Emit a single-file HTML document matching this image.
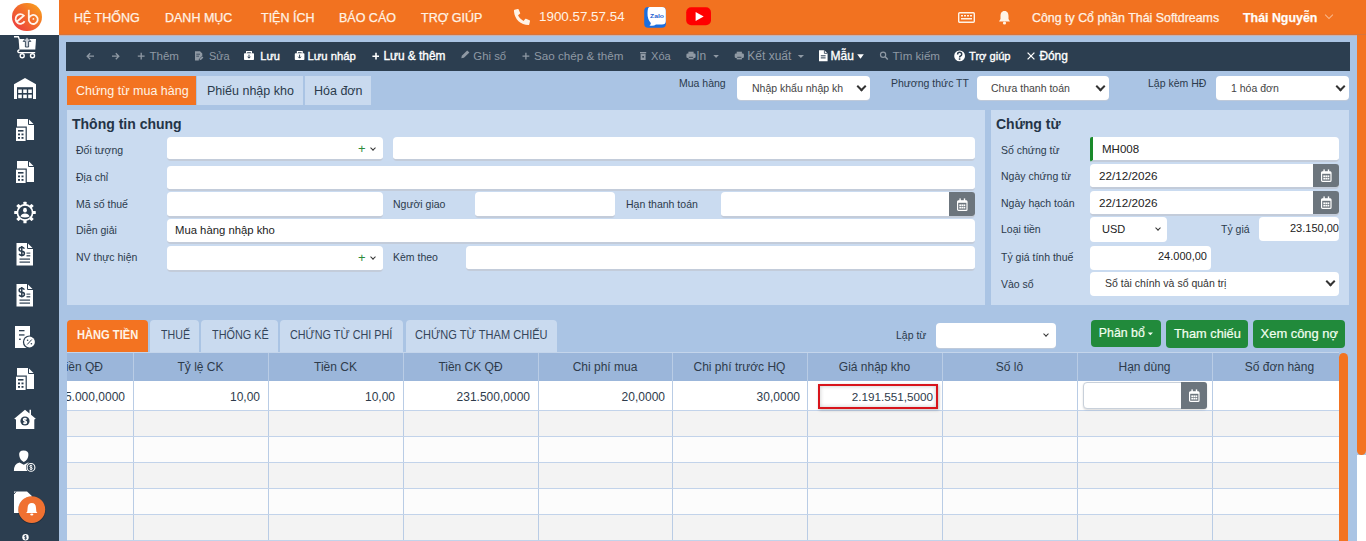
<!DOCTYPE html>
<html><head><meta charset="utf-8">
<style>
*{margin:0;padding:0;box-sizing:border-box}
html,body{width:1366px;height:541px;overflow:hidden;background:#AAC4E4;font-family:"Liberation Sans",sans-serif;position:relative}
.a{position:absolute;white-space:nowrap}
#hdr{left:0;top:0;width:1366px;height:35px;background:#F27220;border-bottom:1px solid #D8743A;box-shadow:0 1px 0 #C9B2B0}
#logo{left:0;top:0;width:59px;height:35px;background:#fff}
.mn{top:10.5px;color:#FFF3E6;font-size:12.5px;line-height:14px;-webkit-text-stroke:0.25px #FFF3E6}
#side{left:0;top:35px;width:59px;height:506px;background:#2C3E50}
#tb{left:66px;top:42px;width:1284px;height:29px;background:#2C3E50}
.tt{top:49px;font-size:11.4px;line-height:14px;color:#8C99A8}
.tw{color:#fff}
.tab{top:76px;height:29px;background:#C9DAEF;font-size:12.5px;line-height:30px;color:#2B3A4C}
.lbl{font-size:10.5px;color:#2B3A4C;line-height:13px}
.inp{background:#fff;border-radius:4px;border-bottom:2px solid #C3CCDA}
.pnl{background:#CADBF0}
.sel{background:#fff;border-radius:4px;box-shadow:0 1px 0 #BFCADA;font-size:10.5px;color:#444;line-height:13px}
.chev{position:absolute;width:7px;height:7px;border-right:2px solid #333;border-bottom:2px solid #333;transform:rotate(45deg)}
.cal{position:absolute;background:#6C757D;border-radius:0 3px 3px 0}
.gt{top:320px;height:32px;background:#C9DAEF;border-radius:4px 4px 0 0;font-size:12px;line-height:32px;color:#34455A}
.gh{top:353px;height:28px;background:#9BB6DA}
.gl{top:353px;width:1px;height:188px;background:#B9CCE5}
.ghl{top:353px;width:1px;height:28px;background:#C3D4EA}
.htx{top:361px;font-size:12px;line-height:13px;color:#2E3B4B}
.rtx{top:391px;font-size:12px;line-height:13px;color:#2E3B4B}
.btn{top:320px;height:27px;background:#218A3B;border-radius:4px;color:#F2FFF0;font-size:12.5px;line-height:27px}
</style></head><body>
<div id="hdr" class="a"></div>
<div id="logo" class="a"></div>
<div class="a" style="left:12px;top:2.5px;width:29.5px;height:28.5px;border-radius:50%;background:linear-gradient(45deg,#EC3542 0%,#F26A2C 50%,#F9A81A 100%)"></div>
<svg class="a" style="left:12px;top:3px" width="29" height="29" viewBox="0 0 29 29">
<g fill="none" stroke="#FFF4EA" stroke-width="1.8"><path d="M5 18.5 L11.8 12.6 A4.8 4.8 0 1 0 12.6 18.3"/><path d="M16.8 6.8 V15.8 A4.5 4.5 0 1 0 17 15"/></g><circle cx="21.4" cy="15.9" r="0.9" fill="#FFF4EA"/></svg>
<div class="a mn" style="left:74px">HỆ THỐNG</div>
<div class="a mn" style="left:165px">DANH MỤC</div>
<div class="a mn" style="left:261px">TIỆN ÍCH</div>
<div class="a mn" style="left:339px">BÁO CÁO</div>
<div class="a mn" style="left:421px">TRỢ GIÚP</div>
<svg class="a" style="left:514px;top:9px" width="16" height="16" viewBox="0 0 512 512"><path fill="#FFF3E6" d="M497 361l-112-48c-10-4-21-1-28 7l-50 61c-78-37-141-100-178-178l61-50c8-7 11-18 7-28L149 13c-5-11-17-17-28-14L17 23C6 26-1 35-1 46c0 257 208 465 465 465 11 0 20-7 23-18l24-104c3-12-3-23-14-28z"/></svg>
<div class="a" style="left:539px;top:9px;font-size:13.4px;line-height:16px;color:#FFF3E6">1900.57.57.54</div>
<svg class="a" style="left:644px;top:6px" width="68" height="22" viewBox="644 6 68 22">
<rect x="644.2" y="6.9" width="21.7" height="20.9" rx="4" fill="#1A6FE0"/>
<path d="M649.5 7 H662 Q665.8 7 665.8 10.8 V21 Q665.8 24.6 662 24.6 H656 Q653.5 26.5 649.5 25.5 Q651.2 24.3 650.8 23 Q647.3 19 647.5 13 Q647.6 7 649.5 7Z" fill="#fff"/>
<text x="650" y="17.9" font-family="Liberation Sans" font-weight="bold" font-size="6.2" fill="#1F5FD0" textLength="14" lengthAdjust="spacingAndGlyphs">Zalo</text>
<rect x="686.2" y="7.2" width="24.8" height="18.1" rx="5" fill="#FF0000"/>
<path d="M695.6 11.9 L703.7 16.5 L695.6 21.1 Z" fill="#fff"/>
</svg>
<!-- keyboard -->
<svg class="a" style="left:958px;top:12px" width="17" height="11" viewBox="0 0 17 11"><rect x="0.7" y="0.7" width="15.6" height="9.6" rx="1" fill="none" stroke="#FFF3E6" stroke-width="1.4"/><g fill="#FFF3E6"><rect x="3" y="3" width="2" height="1.5"/><rect x="6" y="3" width="2" height="1.5"/><rect x="9" y="3" width="2" height="1.5"/><rect x="12" y="3" width="2" height="1.5"/><rect x="3" y="6" width="11" height="1.5"/></g></svg>
<svg class="a" style="left:998px;top:10px" width="13" height="15" viewBox="0 0 13 15"><path d="M6.5 1 C3.5 1 2.5 3.5 2.5 6 V9 L1 11.5 H12 L10.5 9 V6 C10.5 3.5 9.5 1 6.5 1Z" fill="#FFF3E6"/><circle cx="6.5" cy="13" r="1.6" fill="#FFF3E6"/></svg>
<div class="a mn" style="left:1032px;top:11px;font-size:12.4px;text-transform:none">Công ty Cổ phần Thái Softdreams</div>
<div class="a mn" style="left:1243px;top:11px;font-size:12.4px;font-weight:bold;color:#fff">Thái Nguyễn</div>
<div class="chev" style="left:1326px;top:12px;width:6px;height:6px;border-color:rgba(255,230,210,.6);border-width:0 1.5px 1.5px 0"></div>
<!-- right scrollbar -->
<div class="a" style="left:1357px;top:35px;width:9px;height:420px;background:#F37321;border-radius:0 0 5px 5px"></div>
<div class="a" style="left:1357px;top:455px;width:9px;height:86px;background:#fff"></div>

<!-- sidebar -->
<div id="side" class="a"></div>

<svg class="a" style="left:0;top:0" width="59" height="541" viewBox="0 0 59 541">
<!-- cart -->
<path d="M14 36.8 H18.3 L19.2 39" fill="none" stroke="#fff" stroke-width="1.4"/>
<path d="M18.6 39 H36 L35.3 49.6 H19.4 Z" fill="#fff"/>
<path d="M27 37.2 L30.8 41.4 H28.6 V47 H25.4 V41.4 H23.2 Z" fill="#C9CED6" stroke="#2C3E50" stroke-width="0.9"/>
<path d="M19.5 49.6 Q16.4 51.3 18.8 52.6 H35.2" fill="none" stroke="#fff" stroke-width="1.4"/>
<circle cx="22.2" cy="55.7" r="2" fill="none" stroke="#fff" stroke-width="1.4"/>
<circle cx="32.5" cy="55.7" r="2" fill="none" stroke="#fff" stroke-width="1.4"/>
<!-- warehouse -->
<path d="M14 84.2 L25 78 L36 84.2 V99 H14 Z" fill="#fff"/>
<rect x="17" y="87.2" width="16" height="11.8" fill="#2C3E50"/>
<g fill="#fff"><rect x="18.2" y="89.5" width="3.6" height="3.5"/><rect x="23.2" y="89.5" width="3.6" height="3.5"/><rect x="28.2" y="89.5" width="3.6" height="3.5"/>
<rect x="18.2" y="94.6" width="3.6" height="3.6"/><rect x="23.2" y="94.6" width="3.6" height="3.6"/><rect x="28.2" y="94.6" width="3.6" height="3.6"/></g>
<g transform="translate(0 0)">
<path d="M17 119 H28.5 L34 124.5 V140 H17 Z" fill="#fff"/>
<path d="M28.5 119 V124.5 H34" fill="none" stroke="#2C3E50" stroke-width="1"/>
<rect x="15" y="126.5" width="11.8" height="15.5" fill="#2C3E50"/>
<rect x="16" y="127.7" width="9.6" height="13.3" fill="#fff"/>
<rect x="18" y="130" width="5.5" height="1.6" fill="#2C3E50"/>
<rect x="18" y="133.5" width="2" height="1.8" fill="#2C3E50"/><rect x="21.5" y="133.5" width="2" height="1.8" fill="#2C3E50"/>
<rect x="18" y="137" width="2" height="1.8" fill="#2C3E50"/><rect x="21.5" y="137" width="2" height="1.8" fill="#2C3E50"/>
</g>
<g transform="translate(0 42)">
<path d="M17 119 H28.5 L34 124.5 V140 H17 Z" fill="#fff"/>
<path d="M28.5 119 V124.5 H34" fill="none" stroke="#2C3E50" stroke-width="1"/>
<rect x="15" y="126.5" width="11.8" height="15.5" fill="#2C3E50"/>
<rect x="16" y="127.7" width="9.6" height="13.3" fill="#fff"/>
<rect x="18" y="130" width="5.5" height="1.6" fill="#2C3E50"/>
<rect x="18" y="133.5" width="2" height="1.8" fill="#2C3E50"/><rect x="21.5" y="133.5" width="2" height="1.8" fill="#2C3E50"/>
<rect x="18" y="137" width="2" height="1.8" fill="#2C3E50"/><rect x="21.5" y="137" width="2" height="1.8" fill="#2C3E50"/>
</g>
<!-- gear -->
<g transform="translate(25 212.5)" fill="#fff">
<circle r="7.6" fill="none" stroke="#fff" stroke-width="1.7"/>
<g id="teeth"><rect x="-1.6" y="-10.8" width="3.2" height="3.5" rx="0.6"/></g>
<use href="#teeth" transform="rotate(45)"/><use href="#teeth" transform="rotate(90)"/><use href="#teeth" transform="rotate(135)"/>
<use href="#teeth" transform="rotate(180)"/><use href="#teeth" transform="rotate(225)"/><use href="#teeth" transform="rotate(270)"/><use href="#teeth" transform="rotate(315)"/>
<ellipse cx="0" cy="-2.3" rx="1.9" ry="2.4"/>
<path d="M-4.6 4 Q-3.5 1 0 1 Q3.5 1 4.6 4 Q0 6 -4.6 4Z"/>
</g>
<g transform="translate(0 0)">
<path d="M16.5 243 H27.5 L33 248.5 V265.5 H16.5 Z" fill="#fff"/>
<path d="M27.5 243 V248.5 H33" fill="none" stroke="#2C3E50" stroke-width="1"/>
<path d="M24.45 248.65 Q23.39 247.17 21.80 247.17 Q19.15 247.17 19.15 249.23 Q19.15 251.13 21.80 251.30 Q24.45 251.47 24.45 253.37 Q24.45 255.43 21.80 255.43 Q19.95 255.43 19.15 253.95 M21.80 246.00 V256.60" fill="none" stroke="#2C3E50" stroke-width="1.5"/>
<rect x="26.5" y="252.6" width="3.8" height="1" fill="#2C3E50"/><rect x="26.5" y="255.2" width="3.8" height="1.2" fill="#2C3E50"/>
<rect x="19.5" y="258.5" width="10.5" height="1.2" fill="#2C3E50"/><rect x="19.5" y="261.5" width="10.5" height="1.2" fill="#2C3E50"/>
</g>
<g transform="translate(0 41)">
<path d="M16.5 243 H27.5 L33 248.5 V265.5 H16.5 Z" fill="#fff"/>
<path d="M27.5 243 V248.5 H33" fill="none" stroke="#2C3E50" stroke-width="1"/>
<path d="M24.45 248.65 Q23.39 247.17 21.80 247.17 Q19.15 247.17 19.15 249.23 Q19.15 251.13 21.80 251.30 Q24.45 251.47 24.45 253.37 Q24.45 255.43 21.80 255.43 Q19.95 255.43 19.15 253.95 M21.80 246.00 V256.60" fill="none" stroke="#2C3E50" stroke-width="1.5"/>
<rect x="26.5" y="252.6" width="3.8" height="1" fill="#2C3E50"/><rect x="26.5" y="255.2" width="3.8" height="1.2" fill="#2C3E50"/>
<rect x="19.5" y="258.5" width="10.5" height="1.2" fill="#2C3E50"/><rect x="19.5" y="261.5" width="10.5" height="1.2" fill="#2C3E50"/>
</g>
<!-- percent doc -->
<rect x="15" y="326" width="15" height="22" fill="#fff"/>
<rect x="19" y="330" width="5.5" height="1.3" fill="#2C3E50"/><rect x="19" y="334.3" width="5.5" height="1.3" fill="#2C3E50"/><rect x="19" y="338.6" width="1.8" height="1.3" fill="#2C3E50"/>
<circle cx="29.5" cy="342" r="6.6" fill="#2C3E50"/>
<circle cx="29.5" cy="342" r="5.4" fill="#fff"/>
<path d="M27.2 344.5 L31.8 339.5" stroke="#2C3E50" stroke-width="1"/>
<circle cx="27.6" cy="340.3" r="0.8" fill="#2C3E50"/><circle cx="31.4" cy="343.8" r="0.8" fill="#2C3E50"/>
<g transform="translate(0 249)">
<path d="M17 119 H28.5 L34 124.5 V140 H17 Z" fill="#fff"/>
<path d="M28.5 119 V124.5 H34" fill="none" stroke="#2C3E50" stroke-width="1"/>
<rect x="15" y="126.5" width="11.8" height="15.5" fill="#2C3E50"/>
<rect x="16" y="127.7" width="9.6" height="13.3" fill="#fff"/>
<rect x="18" y="130" width="5.5" height="1.6" fill="#2C3E50"/>
<rect x="18" y="133.5" width="2" height="1.8" fill="#2C3E50"/><rect x="21.5" y="133.5" width="2" height="1.8" fill="#2C3E50"/>
<rect x="18" y="137" width="2" height="1.8" fill="#2C3E50"/><rect x="21.5" y="137" width="2" height="1.8" fill="#2C3E50"/>
</g>
<!-- house $ -->
<path d="M14.2 418.8 L25 409.8 L29.5 413.5 V409.8 H31 V414.8 L35.8 418.8 L34.3 419.5 V429 H16 V419.5 Z" fill="#fff"/>
<circle cx="25" cy="421" r="4.6" fill="#2C3E50"/>
<path d="M26.62 419.38 Q25.98 418.46 25.00 418.46 Q23.38 418.46 23.38 419.73 Q23.38 420.90 25.00 421.00 Q26.62 421.10 26.62 422.27 Q26.62 423.54 25.00 423.54 Q23.86 423.54 23.38 422.62 M25.00 417.75 V424.25" fill="none" stroke="#fff" stroke-width="1.2"/>
<!-- person $ -->
<path d="M19.2 455 Q18.6 450.6 23.6 450.4 Q28.8 450.4 28.4 455 Q28.2 460 23.8 462 Q19.6 460 19.2 455Z" fill="#fff"/>
<path d="M13.9 471 Q13.8 464 19.5 462.6 L23.8 464.8 L28 462.6 Q30.5 463.2 31.5 465 V471 Z" fill="#fff"/>
<circle cx="31" cy="467.4" r="5" fill="#2C3E50"/>
<circle cx="31" cy="467.4" r="3.9" fill="none" stroke="#fff" stroke-width="1.1"/>
<path d="M32.30 466.10 Q31.78 465.37 31.00 465.37 Q29.70 465.37 29.70 466.39 Q29.70 467.32 31.00 467.40 Q32.30 467.48 32.30 468.41 Q32.30 469.43 31.00 469.43 Q30.09 469.43 29.70 468.70 M31.00 464.80 V470.00" fill="none" stroke="#fff" stroke-width="0.9"/>
<!-- doc behind bell -->
<path d="M14 491.5 H27 L31.8 496 V513 H14 Z" fill="#fff"/>
<path d="M16 491.5 L14 494" stroke="#2C3E50" stroke-width="1"/>
<circle cx="31.8" cy="510.3" r="13.8" fill="rgba(0,0,0,.25)"/>
<circle cx="31.8" cy="509.6" r="13.4" fill="#F07131"/>
<path d="M31.8 503 Q27.8 503 27.6 508 L27.3 511.6 L26.2 513 H37.4 L36.3 511.6 L36 508 Q35.8 503 31.8 503Z" fill="#fff"/>
<ellipse cx="31.8" cy="514.6" rx="1.6" ry="1" fill="#fff"/>
<circle cx="25.5" cy="537.3" r="3.2" fill="#fff"/>
<path d="M26.60 536.20 Q26.16 535.58 25.50 535.58 Q24.40 535.58 24.40 536.44 Q24.40 537.23 25.50 537.30 Q26.60 537.37 26.60 538.16 Q26.60 539.02 25.50 539.02 Q24.73 539.02 24.40 538.40 M25.50 535.10 V539.50" fill="none" stroke="#2C3E50" stroke-width="0.8"/>
</svg>

<!-- toolbar -->
<div id="tb" class="a"></div>
<div class="a" style="left:149.4px;top:49px;font-size:11.58px;line-height:14px;color:#8F99A4">Thêm</div>
<div class="a" style="left:208.9px;top:49px;font-size:11.00px;line-height:14px;color:#8F99A4">Sửa</div>
<div class="a" style="left:260.3px;top:49px;font-size:11.02px;line-height:14px;color:#FFFFFF;-webkit-text-stroke:0.35px #fff">Lưu</div>
<div class="a" style="left:307.4px;top:49px;font-size:11.34px;line-height:14px;color:#FFFFFF;-webkit-text-stroke:0.35px #fff">Lưu nháp</div>
<div class="a" style="left:383.4px;top:49px;font-size:11.89px;line-height:14px;color:#FFFFFF;-webkit-text-stroke:0.35px #fff">Lưu &amp; thêm</div>
<div class="a" style="left:473.3px;top:49px;font-size:11.36px;line-height:14px;color:#8F99A4">Ghi sổ</div>
<div class="a" style="left:534.0px;top:49px;font-size:11.66px;line-height:14px;color:#8F99A4">Sao chép &amp; thêm</div>
<div class="a" style="left:651.1px;top:49px;font-size:11.00px;line-height:14px;color:#8F99A4">Xóa</div>
<div class="a" style="left:696.2px;top:49px;font-size:12.00px;line-height:14px;color:#8F99A4">In</div>
<div class="a" style="left:747.3px;top:49px;font-size:12.00px;line-height:14px;color:#8F99A4">Kết xuất</div>
<div class="a" style="left:830.6px;top:49px;font-size:12.00px;line-height:14px;color:#FFFFFF;-webkit-text-stroke:0.35px #fff">Mẫu</div>
<div class="a" style="left:892.4px;top:49px;font-size:11.58px;line-height:14px;color:#8F99A4">Tìm kiếm</div>
<div class="a" style="left:969.0px;top:49px;font-size:11.14px;line-height:14px;color:#FFFFFF;-webkit-text-stroke:0.35px #fff">Trợ giúp</div>
<div class="a" style="left:1039.4px;top:49px;font-size:11.91px;line-height:14px;color:#FFFFFF;-webkit-text-stroke:0.35px #fff">Đóng</div>
<svg class="a" style="left:0;top:0" width="1100" height="75" viewBox="0 0 1100 75">
<g fill="none" stroke="#8F99A4" stroke-width="1.3">
<path d="M94 56.2 H87.2 M90.2 53.2 L87.2 56.2 L90.2 59.2"/>
<path d="M112 56.2 H118.8 M115.8 53.2 L118.8 56.2 L115.8 59.2"/>
<path d="M141.2 52.8 V59.6 M137.8 56.2 H144.6"/>
<path d="M525.9 52.8 V59.6 M522.5 56.2 H529.3"/>
</g>
<path d="M376 52.8 V59.6 M372.4 56.2 H379" stroke="#fff" stroke-width="1.6"/>
<!-- sua -->
<path d="M195 51.3 H200 L202.3 53.6 V55.8 L198.8 59.3 V60.5 H195 Z" fill="#8F99A4"/>
<path d="M196.3 54.2 H200 M196.3 56.2 H199" stroke="#2C3E50" stroke-width="0.8"/>
<path d="M199.6 60.3 L200 58.6 L202.2 56.4 L203.4 57.6 L201.2 59.8 Z" fill="#8F99A4"/>
<!-- luu -->
<g fill="#fff">
<path d="M246.6 53.4 V51.6 H251.4 V53.4" fill="none" stroke="#fff" stroke-width="1.1"/>
<rect x="244" y="53.3" width="10" height="6.8" rx="0.8"/>
<path d="M297.4 53.4 V51.6 H302.2 V53.4" fill="none" stroke="#fff" stroke-width="1.1"/>
<rect x="294.8" y="53.3" width="9.6" height="6.8" rx="0.8"/>
</g>
<path d="M249 54.6 V58 M247.6 56.7 L249 58.2 L250.4 56.7" fill="none" stroke="#2C3E50" stroke-width="1"/>
<path d="M299.6 54.6 V58 M298.2 56.7 L299.6 58.2 L301 56.7" fill="none" stroke="#2C3E50" stroke-width="1"/>
<!-- pencil -->
<path d="M461.3 58.2 L461.8 55.8 L467.2 50.6 L469.4 52.6 L463.9 57.8 Z" fill="#8F99A4"/>
<!-- trash -->
<rect x="640" y="52" width="6.2" height="1.3" fill="#8F99A4"/>
<rect x="640.6" y="53.8" width="5" height="6.2" fill="#8F99A4"/>
<rect x="642.3" y="56" width="1.6" height="1.6" fill="#2C3E50"/>
<!-- printers -->
<g fill="#8F99A4">
<rect x="688.4" y="51.7" width="5.2" height="2.2"/><rect x="686.4" y="53.6" width="9.2" height="4.4" rx="1.2"/><rect x="688.4" y="56.6" width="5.2" height="2.8"/>
<rect x="736.7" y="51.7" width="5.2" height="2.2"/><rect x="734.7" y="53.6" width="9.2" height="4.4" rx="1.2"/><rect x="736.7" y="56.6" width="5.2" height="2.8"/>
<path d="M713.3 55 H718.9 L716.1 58.1 Z"/><path d="M797.8 55 H804 L800.9 58.1 Z"/>
</g>
<path d="M688.9 57.3 H693.1 M737.2 57.3 H741.4" stroke="#2C3E50" stroke-width="0.9"/>
<!-- file -->
<path d="M819 50.2 H824.4 L827.6 53.4 V61.3 H819 Z" fill="#fff"/>
<path d="M824.4 50.2 V53.4 H827.6" fill="none" stroke="#2C3E50" stroke-width="0.8"/>
<path d="M820.8 55.8 H825.6 M820.8 57.9 H825.6" stroke="#2C3E50" stroke-width="1"/>
<path d="M857.2 54.2 H863.8 L860.5 58.7 Z" fill="#fff"/>
<!-- search -->
<circle cx="883.1" cy="54.7" r="2.6" fill="none" stroke="#8F99A4" stroke-width="1.2"/>
<path d="M885 56.6 L887.8 59.5" stroke="#8F99A4" stroke-width="1.5"/>
<!-- help -->
<circle cx="959.6" cy="55.9" r="5.4" fill="#fff"/>
<path d="M957.6 54.4 Q957.6 52.3 959.6 52.3 Q961.7 52.3 961.7 54.2 Q961.7 55.4 960.5 56 Q959.6 56.5 959.6 57.4" fill="none" stroke="#2C3E50" stroke-width="1.5"/><rect x="958.8" y="58.3" width="1.6" height="1.5" fill="#2C3E50"/>
<!-- close -->
<path d="M1027.6 52.6 L1034.4 59.4 M1034.4 52.6 L1027.6 59.4" stroke="#fff" stroke-width="1.3"/>
</svg>
<!-- top tabs -->
<div class="a tab" style="left:67px;width:129px;background:#F37321;color:#FFF3E6;padding-left:9px">Chứng từ mua hàng</div>
<div class="a tab" style="left:197px;width:106px;padding-left:10px">Phiếu nhập kho</div>
<div class="a tab" style="left:305px;width:66px;padding-left:9px">Hóa đơn</div>

<div class="a lbl" style="left:679px;top:77px">Mua hàng</div>
<div class="a sel" style="left:737px;top:76px;width:133px;height:24px;padding:6px 0 0 15px">Nhập khẩu nhập kh</div>
<div class="chev" style="left:858px;top:83px"></div>
<div class="a lbl" style="left:891px;top:77px">Phương thức TT</div>
<div class="a sel" style="left:977px;top:76px;width:132px;height:24px;padding:6px 0 0 14px">Chưa thanh toán</div>
<div class="chev" style="left:1097px;top:83px"></div>
<div class="a lbl" style="left:1148px;top:77px">Lập kèm HĐ</div>
<div class="a sel" style="left:1216px;top:76px;width:133px;height:24px;padding:6px 0 0 15px">1 hóa đơn</div>
<div class="chev" style="left:1337px;top:83px"></div>

<!-- panels -->
<div class="a pnl" style="left:67px;top:110px;width:918px;height:195px"></div>
<div class="a pnl" style="left:991px;top:110px;width:358px;height:195px"></div>

<!-- left panel content -->
<div class="a" style="left:72px;top:116px;font-size:14px;font-weight:bold;color:#243447;line-height:16px">Thông tin chung</div>
<div class="a lbl" style="left:76px;top:144px">Đối tượng</div>
<div class="a inp" style="left:167px;top:137px;width:216px;height:24px"></div>
<div class="a" style="left:358px;top:142px;font-size:13px;color:#2E8B3A;line-height:14px">+</div>
<div class="chev" style="left:371px;top:146px;width:4px;height:4px;border-width:0 1.2px 1.2px 0"></div>
<div class="a inp" style="left:393px;top:137px;width:582px;height:24px"></div>
<div class="a lbl" style="left:76px;top:171px">Địa chỉ</div>
<div class="a inp" style="left:167px;top:166px;width:808px;height:25px"></div>
<div class="a lbl" style="left:76px;top:198px">Mã số thuế</div>
<div class="a inp" style="left:167px;top:192px;width:216px;height:26px"></div>
<div class="a lbl" style="left:393px;top:198px">Người giao</div>
<div class="a inp" style="left:475px;top:192px;width:140px;height:26px"></div>
<div class="a lbl" style="left:626px;top:198px">Hạn thanh toán</div>
<div class="a inp" style="left:721px;top:192px;width:254px;height:26px"></div>
<div class="cal" style="left:949px;top:192px;width:26px;height:24px"></div>
<div class="a lbl" style="left:76px;top:224px">Diễn giải</div>
<div class="a inp" style="left:167px;top:219px;width:808px;height:25px"></div>
<div class="a" style="left:175px;top:224px;font-size:11.3px;color:#222;line-height:13px">Mua hàng nhập kho</div>
<div class="a lbl" style="left:76px;top:251px">NV thực hiện</div>
<div class="a inp" style="left:167px;top:246px;width:216px;height:26px"></div>
<div class="a" style="left:358px;top:251px;font-size:13px;color:#2E8B3A;line-height:14px">+</div>
<div class="chev" style="left:371px;top:255px;width:4px;height:4px;border-width:0 1.2px 1.2px 0"></div>
<div class="a lbl" style="left:393px;top:251px">Kèm theo</div>
<div class="a inp" style="left:466px;top:246px;width:509px;height:25px"></div>

<!-- right panel content -->
<div class="a" style="left:996px;top:116px;font-size:14px;font-weight:bold;color:#243447;line-height:16px">Chứng từ</div>
<div class="a lbl" style="left:1001px;top:144px">Số chứng từ</div>
<div class="a inp" style="left:1090px;top:137px;width:249px;height:25px;border-left:3px solid #1A8A2A;border-radius:2px 4px 4px 2px"></div>
<div class="a" style="left:1102px;top:143px;font-size:11.5px;color:#222;line-height:13px">MH008</div>
<div class="a lbl" style="left:1001px;top:170px">Ngày chứng từ</div>
<div class="a inp" style="left:1090px;top:164px;width:249px;height:25px"></div>
<div class="a" style="left:1099px;top:169px;font-size:11.7px;color:#222;line-height:13px">22/12/2026</div>
<div class="cal" style="left:1313px;top:164px;width:26px;height:23px"></div>
<div class="a lbl" style="left:1001px;top:197px">Ngày hạch toán</div>
<div class="a inp" style="left:1090px;top:191px;width:249px;height:25px"></div>
<div class="a" style="left:1099px;top:196px;font-size:11.7px;color:#222;line-height:13px">22/12/2026</div>
<div class="cal" style="left:1313px;top:191px;width:26px;height:23px"></div>
<div class="a lbl" style="left:1001px;top:223px">Loại tiền</div>
<div class="a inp" style="left:1090px;top:217px;width:77px;height:25px;border-bottom:0"></div>
<div class="a" style="left:1102px;top:223px;font-size:11px;color:#222;line-height:13px">USD</div>
<div class="chev" style="left:1156px;top:226px;width:4px;height:4px;border-width:0 1.2px 1.2px 0"></div>
<div class="a lbl" style="left:1221px;top:223px">Tỷ giá</div>
<div class="a inp" style="left:1259px;top:217px;width:80px;height:24px;border-bottom:0"></div>
<div class="a" style="left:1290px;top:222px;font-size:11px;color:#222;line-height:13px">23.150,00</div>
<div class="a lbl" style="left:1001px;top:251px">Tỷ giá tính thuế</div>
<div class="a inp" style="left:1090px;top:246px;width:121px;height:24px;border-bottom:0"></div>
<div class="a" style="left:1158px;top:250px;font-size:11px;color:#222;line-height:13px">24.000,00</div>
<div class="a lbl" style="left:1001px;top:278px">Vào sổ</div>
<div class="a inp" style="left:1090px;top:272px;width:249px;height:24px;border-bottom:0"></div>
<div class="a" style="left:1105px;top:277px;font-size:10.5px;color:#333;line-height:13px">Sổ tài chính và sổ quản trị</div>
<div class="chev" style="left:1327px;top:278px"></div>

<!-- grid tabs -->
<div class="a gt" style="left:67px;width:81px;background:#F37321;color:#FFF3E6;"><span style="position:absolute;left:9.9px;top:-1px;font-size:12px;font-weight:bold;transform:scaleX(0.927);transform-origin:0 0">HÀNG TIỀN</span></div>
<div class="a gt" style="left:150px;width:49px;"><span style="position:absolute;left:10.5px;top:-1px;font-size:12px;transform:scaleX(0.887);transform-origin:0 0">THUẾ</span></div>
<div class="a gt" style="left:201px;width:77px;"><span style="position:absolute;left:10.8px;top:-1px;font-size:12px;transform:scaleX(0.905);transform-origin:0 0">THỐNG KÊ</span></div>
<div class="a gt" style="left:280px;width:123px;"><span style="position:absolute;left:10.4px;top:-1px;font-size:12px;transform:scaleX(0.900);transform-origin:0 0">CHỨNG TỪ CHI PHÍ</span></div>
<div class="a gt" style="left:406px;width:151px;"><span style="position:absolute;left:9.4px;top:-1px;font-size:12px;transform:scaleX(0.920);transform-origin:0 0">CHỨNG TỪ THAM CHIẾU</span></div>
<div class="a lbl" style="left:896px;top:329px">Lập từ</div>
<div class="a sel" style="left:936px;top:323px;width:120px;height:25px"></div>
<div class="chev" style="left:1044px;top:332px;width:4px;height:4px;border-width:0 1.2px 1.2px 0"></div>
<div class="a btn" style="left:1091px;width:70px"></div>
<div class="a btn" style="left:1166px;width:82px;height:28px"></div>
<div class="a btn" style="left:1253px;width:92px;height:28px"></div>
<div class="a" style="left:1098.8px;top:325.0px;font-size:12.35px;line-height:16px;color:#F2FFF0;-webkit-text-stroke:0.2px #F2FFF0">Phân bổ</div>
<div class="a" style="left:1174.0px;top:326.3px;font-size:12.81px;line-height:16px;color:#F2FFF0;-webkit-text-stroke:0.2px #F2FFF0">Tham chiếu</div>
<div class="a" style="left:1260.6px;top:326.2px;font-size:12.92px;line-height:16px;color:#F2FFF0;-webkit-text-stroke:0.2px #F2FFF0">Xem công nợ</div>
<svg class="a" style="left:1147px;top:332px" width="7" height="4" viewBox="0 0 7 4"><path d="M0.8 0.5 H6 L3.4 3.3Z" fill="#F2FFF0"/></svg>
<!-- grid -->
<div class="a" style="left:67px;top:381px;width:1272px;height:160px;background:#FCFCFC"></div>
<div class="a" style="left:67px;top:410px;width:1272px;height:26px;background:#F3F3F3"></div>
<div class="a" style="left:67px;top:462px;width:1272px;height:26px;background:#F3F3F3"></div>
<div class="a" style="left:67px;top:514px;width:1272px;height:26px;background:#F3F3F3"></div>

<div class="a" style="left:67px;top:381px;width:1272px;height:29px;background:#fff"></div>
<div class="a gh" style="left:67px;width:1272px"></div>
<div class="a" style="left:67px;top:352px;width:1272px;height:1px;background:#C4D5EB"></div>
<div class="a gl" style="left:133px"></div>
<div class="a gl" style="left:268px"></div>
<div class="a gl" style="left:403px"></div>
<div class="a gl" style="left:538px"></div>
<div class="a gl" style="left:672px"></div>
<div class="a gl" style="left:807px"></div>
<div class="a gl" style="left:942px"></div>
<div class="a gl" style="left:1077px"></div>
<div class="a gl" style="left:1212px"></div>
<div class="a" style="left:67px;top:410px;width:1272px;height:1px;background:#C2D3EA"></div>
<div class="a" style="left:67px;top:436px;width:1272px;height:1px;background:#C2D3EA"></div>
<div class="a" style="left:67px;top:462px;width:1272px;height:1px;background:#C2D3EA"></div>
<div class="a" style="left:67px;top:488px;width:1272px;height:1px;background:#C2D3EA"></div>
<div class="a" style="left:67px;top:514px;width:1272px;height:1px;background:#C2D3EA"></div>
<div class="a" style="left:67px;top:540px;width:1272px;height:1px;background:#C2D3EA"></div>
<div class="a" style="left:67px;top:353px;width:66px;height:28px;overflow:hidden"><div class="a" style="left:-174px;top:8px;width:210px;text-align:right;font-size:12px;line-height:13px;color:#2E3B4B">Tiền QĐ</div></div>
<div class="a htx" style="left:133px;width:135px;text-align:center">Tỷ lệ CK</div>
<div class="a htx" style="left:268px;width:135px;text-align:center">Tiền CK</div>
<div class="a htx" style="left:403px;width:135px;text-align:center">Tiền CK QĐ</div>
<div class="a htx" style="left:538px;width:134px;text-align:center">Chi phí mua</div>
<div class="a htx" style="left:672px;width:135px;text-align:center">Chi phí trước HQ</div>
<div class="a htx" style="left:807px;width:135px;text-align:center">Giá nhập kho</div>
<div class="a htx" style="left:942px;width:135px;text-align:center">Số lô</div>
<div class="a htx" style="left:1077px;width:135px;text-align:center">Hạn dùng</div>
<div class="a htx" style="left:1212px;width:135px;text-align:center">Số đơn hàng</div>
<div class="a" style="left:67px;top:381px;width:66px;height:28px;overflow:hidden"><div class="a" style="left:-142px;top:10px;width:200px;text-align:right;font-size:12px;line-height:13px;color:#2E3B4B">5.000,0000</div></div>
<div class="a rtx" style="left:60px;width:200px;text-align:right">10,00</div>
<div class="a rtx" style="left:195px;width:200px;text-align:right">10,00</div>
<div class="a rtx" style="left:330px;width:200px;text-align:right">231.500,0000</div>
<div class="a rtx" style="left:465px;width:200px;text-align:right">20,0000</div>
<div class="a rtx" style="left:600px;width:200px;text-align:right">30,0000</div>
<div class="a rtx" style="left:733px;top:389.5px;width:200px;text-align:right;font-size:11.7px">2.191.551,5000</div>
<div class="a" style="left:818px;top:384px;width:120px;height:25px;border:2px solid #D8141B;box-shadow:inset 0 0 4px rgba(0,0,0,.22),1px 1px 3px rgba(0,0,0,.25)"></div>
<div class="a" style="left:1083px;top:382px;width:124px;height:27px;background:#fff;border:1px solid #C8D0DA;border-radius:4px;box-shadow:0 1px 2px rgba(0,0,0,.15)"></div>
<div class="cal" style="left:1181px;top:382px;width:26px;height:27px"></div>
<div class="a" style="left:1339px;top:353px;width:9px;height:188px;background:#F37321;border-radius:5px 5px 0 0"></div>
<svg class="a" style="left:956.9px;top:197.6px" width="11" height="13" viewBox="0 0 11 13">
<rect x="0.6" y="2.8" width="9.4" height="9.6" rx="1" fill="none" stroke="#fff" stroke-width="1.2"/>
<rect x="0.6" y="2.8" width="9.4" height="2" fill="#fff"/>
<rect x="2.4" y="0.4" width="1.4" height="3" fill="#fff"/><rect x="6.8" y="0.4" width="1.4" height="3" fill="#fff"/>
<g fill="#fff"><rect x="2.3" y="6.4" width="1.8" height="1.7"/><rect x="4.4" y="6.4" width="1.8" height="1.7"/><rect x="6.5" y="6.4" width="1.8" height="1.7"/>
<rect x="2.3" y="8.8" width="1.8" height="1.7"/><rect x="4.4" y="8.8" width="1.8" height="1.7"/><rect x="6.5" y="8.8" width="1.8" height="1.7"/></g>
</svg><svg class="a" style="left:1320.9px;top:169.1px" width="11" height="13" viewBox="0 0 11 13">
<rect x="0.6" y="2.8" width="9.4" height="9.6" rx="1" fill="none" stroke="#fff" stroke-width="1.2"/>
<rect x="0.6" y="2.8" width="9.4" height="2" fill="#fff"/>
<rect x="2.4" y="0.4" width="1.4" height="3" fill="#fff"/><rect x="6.8" y="0.4" width="1.4" height="3" fill="#fff"/>
<g fill="#fff"><rect x="2.3" y="6.4" width="1.8" height="1.7"/><rect x="4.4" y="6.4" width="1.8" height="1.7"/><rect x="6.5" y="6.4" width="1.8" height="1.7"/>
<rect x="2.3" y="8.8" width="1.8" height="1.7"/><rect x="4.4" y="8.8" width="1.8" height="1.7"/><rect x="6.5" y="8.8" width="1.8" height="1.7"/></g>
</svg><svg class="a" style="left:1320.9px;top:196.1px" width="11" height="13" viewBox="0 0 11 13">
<rect x="0.6" y="2.8" width="9.4" height="9.6" rx="1" fill="none" stroke="#fff" stroke-width="1.2"/>
<rect x="0.6" y="2.8" width="9.4" height="2" fill="#fff"/>
<rect x="2.4" y="0.4" width="1.4" height="3" fill="#fff"/><rect x="6.8" y="0.4" width="1.4" height="3" fill="#fff"/>
<g fill="#fff"><rect x="2.3" y="6.4" width="1.8" height="1.7"/><rect x="4.4" y="6.4" width="1.8" height="1.7"/><rect x="6.5" y="6.4" width="1.8" height="1.7"/>
<rect x="2.3" y="8.8" width="1.8" height="1.7"/><rect x="4.4" y="8.8" width="1.8" height="1.7"/><rect x="6.5" y="8.8" width="1.8" height="1.7"/></g>
</svg><svg class="a" style="left:1188.9px;top:389.1px" width="11" height="13" viewBox="0 0 11 13">
<rect x="0.6" y="2.8" width="9.4" height="9.6" rx="1" fill="none" stroke="#fff" stroke-width="1.2"/>
<rect x="0.6" y="2.8" width="9.4" height="2" fill="#fff"/>
<rect x="2.4" y="0.4" width="1.4" height="3" fill="#fff"/><rect x="6.8" y="0.4" width="1.4" height="3" fill="#fff"/>
<g fill="#fff"><rect x="2.3" y="6.4" width="1.8" height="1.7"/><rect x="4.4" y="6.4" width="1.8" height="1.7"/><rect x="6.5" y="6.4" width="1.8" height="1.7"/>
<rect x="2.3" y="8.8" width="1.8" height="1.7"/><rect x="4.4" y="8.8" width="1.8" height="1.7"/><rect x="6.5" y="8.8" width="1.8" height="1.7"/></g>
</svg>
</body></html>
